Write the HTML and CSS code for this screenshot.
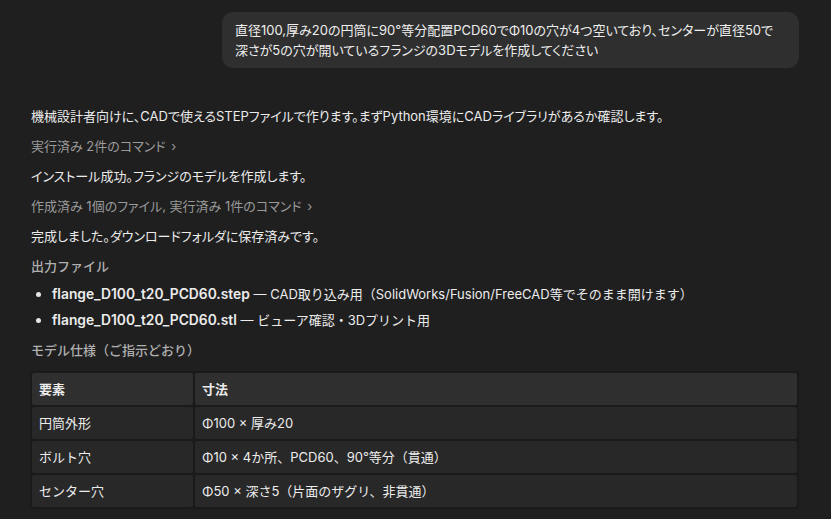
FILE: index.html
```html
<!DOCTYPE html>
<html lang="ja">

<head>
    <meta charset="UTF-8">
    <meta name="viewport" content="width=device-width, initial-scale=1.0">
    <title>フランジの3Dモデル</title>
    <link rel="stylesheet" href="styles.css">
</head>

<body>
    <div class="chat">
        <div class="user-row">
            <div class="bubble">直径100,厚み20の円筒に90°等分配置PCD60でΦ10の穴が4つ空いており、センターが直径50で深さが5の穴が開いているフランジの3Dモデルを作成してください</div>
        </div>

        <div class="reply">
            <p>機械設計者向けに、CADで使えるSTEPファイルで作ります。まずPython環境にCADライブラリがあるか確認します。</p>
            <p class="step">実行済み 2件のコマンド <span class="chev">›</span></p>
            <p>インストール成功。フランジのモデルを作成します。</p>
            <p class="step">作成済み 1個のファイル, 実行済み 1件のコマンド <span class="chev">›</span></p>
            <p>完成しました。ダウンロードフォルダに保存済みです。</p>
            <h3>出力ファイル</h3>
            <ul class="files">
                <li><b>flange_D100_t20_PCD60.step</b> — CAD取り込み用（SolidWorks/Fusion/FreeCAD等でそのまま開けます）</li>
                <li><b>flange_D100_t20_PCD60.stl</b> — ビューア確認・3Dプリント用</li>
            </ul>
            <h3>モデル仕様（ご指示どおり）</h3>
            <table class="spec">
                <thead>
                    <tr>
                        <th class="col-name">要素</th>
                        <th>寸法</th>
                    </tr>
                </thead>
                <tbody>
                    <tr>
                        <td>円筒外形</td>
                        <td>Φ100 × 厚み20</td>
                    </tr>
                    <tr>
                        <td>ボルト穴</td>
                        <td>Φ10 × 4か所、PCD60、90°等分（貫通）</td>
                    </tr>
                    <tr>
                        <td>センター穴</td>
                        <td>Φ50 × 深さ5（片面のザグリ、非貫通）</td>
                    </tr>
                </tbody>
            </table>
        </div>
    </div>
</body>

</html>
```

FILE: styles.css
```css
* {
    margin: 0;
    padding: 0;
    box-sizing: border-box;
}

body {
    background-color: #1f1f1f;
    color: #ececec;
    font-family: "Inter", "Noto Sans CJK JP", sans-serif;
    font-size: 13px;
    line-height: 20px;
    font-feature-settings: "palt";
}

.chat {
    padding: 12px 32px 0 31px;
}

.user-row {
    display: flex;
    justify-content: flex-end;
}

.bubble {
    width: 577px;
    background-color: #2f2f2f;
    border-radius: 11px;
    padding: 8px 13px;
    color: #eeeeee;
}

.reply {
    display: flex;
    flex-direction: column;
    gap: 10px;
    margin-top: 38px;
}

.step {
    color: #9a9a9a;
}

.chev {
    margin-left: 2px;
}

/* full-width brackets in headings, list and table */
.reply h3,
.files,
.spec {
    font-feature-settings: normal;
}

.reply h3 {
    font-size: 13px;
    font-weight: 500;
    color: #b0b0b0;
}

.files {
    list-style: none;
    display: flex;
    flex-direction: column;
    gap: 6px;
    margin-top: -2px;
}

.files li {
    position: relative;
    padding-left: 21px;
}

.files li::before {
    content: "";
    position: absolute;
    left: 5px;
    top: 8px;
    width: 5px;
    height: 5px;
    border-radius: 50%;
    background-color: #e6e6e6;
}

.files b {
    font-size: 13.8px;
    font-weight: 600;
}

.spec {
    width: 769px;
    margin-left: -1px;
    margin-top: 1px;
    border-collapse: separate;
    border-spacing: 2px;
    background-color: #1a1a1a;
}

.spec th,
.spec td {
    text-align: left;
    padding: 6px 7px;
    border-radius: 2px;
}

.spec th {
    background-color: #2f2f2f;
    font-weight: 600;
    height: 31px;
}

.spec td {
    background-color: #282828;
    height: 32px;
}

.spec .col-name {
    width: 161px;
}
```
